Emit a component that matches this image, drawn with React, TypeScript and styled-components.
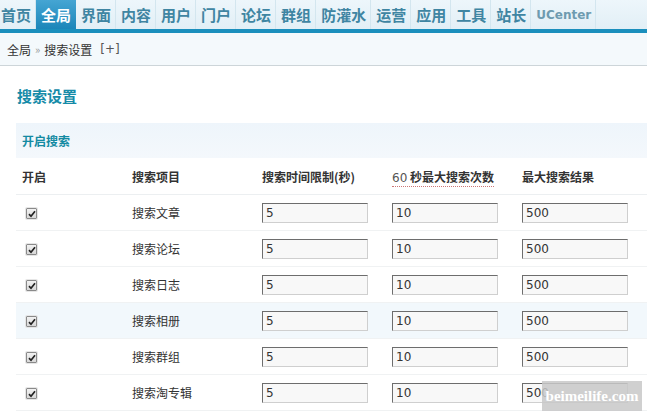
import React from "react";
import styled, { createGlobalStyle } from "styled-components";

const GlobalStyle = createGlobalStyle`
  html, body { margin: 0; padding: 0; background: #fff; }
  body {
    font-family: "Noto Sans CJK SC", "DejaVu Sans", sans-serif;
    font-size: 12px;
    color: #333;
    width: 647px;
    overflow: hidden;
  }
`;

const Page = styled.div`
  position: relative;
  width: 647px;
  height: 417px;
  overflow: hidden;
`;

const Nav = styled.nav`
  display: flex;
  height: 29px;
  background: linear-gradient(#edf6fb, #e2eff6);
  border-bottom: 4px solid #1b8fbd;
`;

const NavItem = styled.a<{ $active?: boolean; $latin?: boolean }>`
  display: flex;
  align-items: center;
  padding: 0 4px 0 5px;
  height: 29px;
  font-family: ${(p) => (p.$latin ? `"DejaVu Sans", sans-serif` : `"Noto Sans CJK SC", sans-serif`)};
  font-size: ${(p) => (p.$latin ? "12px" : "15px")};
  font-weight: bold;
  color: ${(p) => (p.$active ? "#fff" : p.$latin ? "#6e9bb0" : "#3f85a2")};
  background: ${(p) => (p.$active ? "linear-gradient(#45a5d3, #1c86b9)" : "transparent")};
  border-right: 1px solid ${(p) => (p.$active ? "transparent" : "#d3e6ef")};
  text-decoration: none;
  white-space: nowrap;
  &:first-child { padding-left: 1px; }
`;

const Crumb = styled.div`
  display: flex;
  align-items: center;
  gap: 4px;
  height: 32px;
  padding-left: 7px;
  background: #f4f9fc;
  border-bottom: 1px solid #cdd5d9;
  font-size: 12px;
  color: #333;
`;

const Raquo = styled.span`
  color: #999;
  font-size: 11px;
`;

const Plus = styled.span`
  margin-left: 4px;
  color: #555;
  font-family: "DejaVu Sans", sans-serif;
  font-size: 12px;
`;

const Main = styled.div`
  padding: 20px 0 0 16px;
`;

const Title = styled.h3`
  margin: 0 0 17px 1px;
  height: 20px;
  line-height: 20px;
  font-size: 15px;
  font-weight: bold;
  color: #168ba8;
`;

const Section = styled.div`
  height: 35px;
  display: flex;
  align-items: center;
  padding-left: 6px;
  background: linear-gradient(#eef5fb, #f4f8fc);
  font-size: 12px;
  font-weight: bold;
  color: #138aa2;
`;

const Row = styled.div<{ $head?: boolean; $hl?: boolean }>`
  display: grid;
  grid-template-columns: 110px 130px 130px 130px 1fr;
  align-items: center;
  height: ${(p) => (p.$head ? "36px" : "35px")};
  border-bottom: 1px solid ${(p) => (p.$head ? "#eceff1" : "#f0f2f3")};
  background: ${(p) => (p.$hl ? "#f2f8fc" : "#fff")};
  font-weight: ${(p) => (p.$head ? "bold" : "normal")};
  color: #333;
`;

const Cell = styled.div`
  padding-left: 6px;
  white-space: nowrap;
`;

const Dotted = styled.span`
  border-bottom: 1px dotted #c77;
  padding-bottom: 1px;
`;

const Num = styled.span`
  font-family: "DejaVu Sans", sans-serif;
  font-weight: normal;
  color: #555;
`;

const Check = styled.span`
  display: inline-flex;
  align-items: center;
  justify-content: center;
  width: 9px;
  height: 9px;
  margin: -2px 0 0 4px;
  border: 1px solid #8a8a8a;
  border-radius: 1px;
  background: linear-gradient(#f2f2f2, #d8d8d8);
  box-shadow: 0 0 0 1px #e6e6e6;
  vertical-align: middle;
  svg { display: block; }
`;

const Input = styled.input`
  box-sizing: border-box;
  width: 106px;
  height: 20px;
  padding: 0 3px;
  margin: 0;
  border: 1px solid;
  border-color: #6d6d6d #cfcfcf #cfcfcf #6d6d6d;
  background: #f8f8f8;
  font-family: "DejaVu Sans", sans-serif;
  font-size: 12px;
  color: #333;
  outline: none;
`;

const Watermark = styled.div`
  position: absolute;
  left: 542px;
  top: 381px;
  width: 100px;
  height: 30px;
  display: flex;
  align-items: center;
  justify-content: center;
  background: rgba(200, 200, 200, 0.85);
  color: #fff;
  font-family: "Liberation Serif", serif;
  font-weight: bold;
  font-size: 15px;
`;

const navItems = ["首页", "全局", "界面", "内容", "用户", "门户", "论坛", "群组", "防灌水", "运营", "应用", "工具", "站长", "UCenter"];

const rows = ["搜索文章", "搜索论坛", "搜索日志", "搜索相册", "搜索群组", "搜索淘专辑"];

const CheckMark = () => (
  <svg width="8" height="8" viewBox="0 0 8 8">
    <path d="M1 4.2 L3 6.3 L7 1.3" fill="none" stroke="#222" strokeWidth="1.7" />
  </svg>
);

export default function App() {
  return (
    <Page>
      <GlobalStyle />
      <Nav>
        {navItems.map((n) => (
          <NavItem key={n} $active={n === "全局"} $latin={n === "UCenter"}>
            {n}
          </NavItem>
        ))}
      </Nav>
      <Crumb>
        全局 <Raquo>»</Raquo> 搜索设置 <Plus>[+]</Plus>
      </Crumb>
      <Main>
        <Title>搜索设置</Title>
        <Section>开启搜索</Section>
        <Row $head>
          <Cell>开启</Cell>
          <Cell>搜索项目</Cell>
          <Cell>搜索时间限制(秒)</Cell>
          <Cell>
            <Dotted>
              <Num>60</Num> 秒最大搜索次数
            </Dotted>
          </Cell>
          <Cell>最大搜索结果</Cell>
        </Row>
        {rows.map((r, i) => (
          <Row key={r} $hl={i === 3}>
            <Cell>
              <Check>
                <CheckMark />
              </Check>
            </Cell>
            <Cell>{r}</Cell>
            <Cell>
              <Input defaultValue="5" />
            </Cell>
            <Cell>
              <Input defaultValue="10" />
            </Cell>
            <Cell>
              <Input defaultValue="500" />
            </Cell>
          </Row>
        ))}
      </Main>
      <Watermark>beimeilife.com</Watermark>
    </Page>
  );
}
